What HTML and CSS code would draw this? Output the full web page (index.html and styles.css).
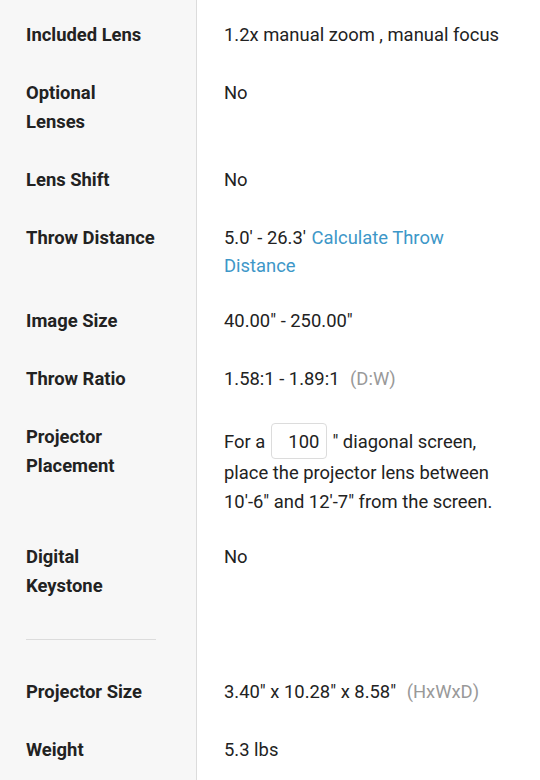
FILE: index.html
```html
<!DOCTYPE html>
<html lang="en">
<head>
<meta charset="utf-8">
<title>Projector specifications</title>
<link rel="stylesheet" href="styles.css">
</head>
<body>
<div class="specs">
  <div class="row">
    <div class="label">Included Lens</div>
    <div class="value">1.2x manual zoom , manual focus</div>
  </div>
  <div class="row">
    <div class="label">Optional Lenses</div>
    <div class="value">No</div>
  </div>
  <div class="row">
    <div class="label">Lens Shift</div>
    <div class="value">No</div>
  </div>
  <div class="row">
    <div class="label">Throw Distance</div>
    <div class="value">5.0' - 26.3' <a class="link" href="#">Calculate Throw Distance</a></div>
  </div>
  <div class="row">
    <div class="label">Image Size</div>
    <div class="value">40.00" - 250.00"</div>
  </div>
  <div class="row">
    <div class="label">Throw Ratio</div>
    <div class="value">1.58:1 - 1.89:1 <span class="note">(D:W)</span></div>
  </div>
  <div class="row">
    <div class="label">Projector Placement</div>
    <div class="value">For a <input class="size-input" type="text" value="100"> " diagonal screen, place the projector lens between 10'-6" and 12'-7" from the screen.</div>
  </div>
  <div class="row">
    <div class="label">Digital Keystone</div>
    <div class="value">No</div>
  </div>
  <div class="divider"></div>
  <div class="row">
    <div class="label">Projector Size</div>
    <div class="value">3.40" x 10.28" x 8.58" <span class="note">(HxWxD)</span></div>
  </div>
  <div class="row">
    <div class="label">Weight</div>
    <div class="value">5.3 lbs</div>
  </div>
</div>
</body>
</html>
```
FILE: styles.css
```css
html, body {
  margin: 0;
  padding: 0;
  background: #fff;
}

body {
  font-family: Roboto, "Liberation Sans", sans-serif;
  font-size: 18.4px;
  color: #222;
}

.specs {
  min-height: 100vh;
  box-sizing: border-box;
  padding-top: 5px;
  background: linear-gradient(to right, #f7f7f7 0, #f7f7f7 196px, #dcdcdc 196px, #dcdcdc 197px, #fff 197px);
}

.row {
  display: grid;
  grid-template-columns: 197px 1fr;
}

.label {
  padding: 14.5px 41px 14.5px 26px;
  line-height: 29px;
  font-weight: 700;
}

.value {
  padding: 15.5px 30px 11.5px 27px;
  line-height: 28.4px;
}

.link {
  color: #3d97c8;
  text-decoration: none;
  margin-left: 1px;
}

.note {
  color: #999;
  margin-left: 6px;
}

.size-input {
  font: inherit;
  color: #222;
  width: 56px;
  height: 36px;
  box-sizing: border-box;
  border: 1px solid #dcdcdc;
  border-radius: 4px;
  padding: 0 0 0 10px;
  margin: 0 1px;
  text-align: center;
  background: #fff;
}

.divider {
  width: 130px;
  height: 1px;
  background: #dcdcdc;
  margin: 24px 0 23px 26px;
}
```
